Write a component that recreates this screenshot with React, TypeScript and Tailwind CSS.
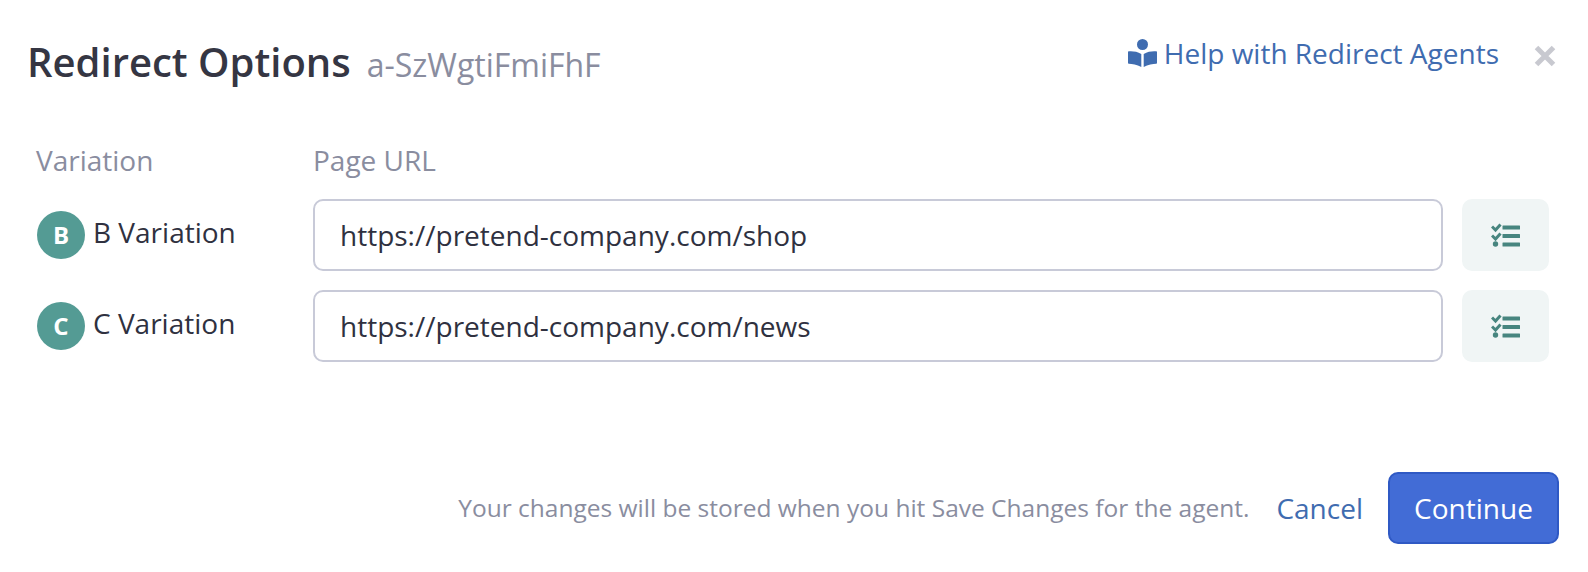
const font = { fontFamily: '"Open Sans", sans-serif' };

const ChecklistIcon = () => (
  <svg width="29" height="24" viewBox="0 0 29 24" fill="none">
    <path d="M1 3.5 L4.5 7 L9.5 1.5" stroke="#47857f" strokeWidth="3" />
    <path d="M1 12.5 L4.5 16 L9.5 10.5" stroke="#47857f" strokeWidth="3" />
    <circle cx="4.5" cy="21" r="2.7" fill="#47857f" />
    <rect x="11.5" y="2.5" width="17.5" height="4" rx="0.5" fill="#47857f" />
    <rect x="11.5" y="11" width="17.5" height="4" rx="0.5" fill="#47857f" />
    <rect x="11.5" y="19.5" width="17.5" height="4" rx="0.5" fill="#47857f" />
  </svg>
);

const BookReaderIcon = () => (
  <svg width="29" height="28" viewBox="0 0 29 28" fill="#3f6cb0">
    <circle cx="14.5" cy="5.5" r="5.5" />
    <path d="M0 12.5 C4 12 9 12.5 13.3 15 V28 C9 25.8 4 25 0.8 24.8 C0.3 24.8 0 24.4 0 24 Z" />
    <path d="M29 12.5 C25 12 20 12.5 15.7 15 V28 C20 25.8 25 25 28.2 24.8 C28.7 24.8 29 24.4 29 24 Z" />
  </svg>
);

const CloseIcon = () => (
  <svg width="22" height="22" viewBox="0 0 22 22" fill="none" className="ml-[35px] mt-[6px]">
    <path d="M2.5 2.5 L19.5 19.5 M19.5 2.5 L2.5 19.5" stroke="#c8c9d0" strokeWidth="5" />
  </svg>
);

const rows = [
  { letter: "B", url: "https://pretend-company.com/shop" },
  { letter: "C", url: "https://pretend-company.com/news" },
];

export default function App() {
  return (
    <div
      className="w-[1588px] h-[572px] bg-white flex flex-col overflow-hidden text-[#2f3140]"
      style={font}
    >
      <div className="flex items-start justify-between pl-[27px] pr-[32px] pt-[36px]">
        <div className="flex items-baseline gap-[16px]">
          <h1 className="text-[40px] leading-[52px] font-semibold text-[#353643]">Redirect Options</h1>
          <span className="text-[32px] leading-[40px] text-[#8a8d9f]">a-SzWgtiFmiFhF</span>
        </div>
        <div className="flex items-center mt-[-1px]">
          <a className="flex items-center gap-[7px] text-[28px] leading-[36px] text-[#3f6cb0]">
            <BookReaderIcon />
            Help with Redirect Agents
          </a>
          <CloseIcon />
        </div>
      </div>

      <div className="flex pl-[36px] mt-[54px] text-[28px] leading-[36px] text-[#8a8d9f]">
        <div className="w-[277px]">Variation</div>
        <div>Page URL</div>
      </div>

      <div className="flex flex-col gap-[19px] pl-[37px] pr-[39px] mt-[21px]">
        {rows.map((row) => (
          <div key={row.letter} className="flex items-center">
            <div className="w-[276px] flex items-center gap-[8px]">
              <div className="w-[48px] h-[48px] rounded-full bg-[#549b94] text-white text-[24px] font-bold flex items-center justify-center">
                {row.letter}
              </div>
              <span className="text-[28px] leading-[36px] text-[#2f3140] mt-[-6px]">{row.letter} Variation</span>
            </div>
            <input
              readOnly
              value={row.url}
              className="w-[1130px] h-[72px] rounded-[10px] border-2 border-[#c8cad8] px-[25px] text-[28px] text-[#2f3140] outline-none"
            />
            <button className="ml-[19px] w-[87px] h-[72px] rounded-[10px] bg-[#f0f5f5] flex items-center justify-center">
              <ChecklistIcon />
            </button>
          </div>
        ))}
      </div>

      <div className="flex items-center justify-end pr-[29px] mt-[110px]">
        <span className="text-[24.5px] text-[#8a8d9f]">Your changes will be stored when you hit Save Changes for the agent.</span>
        <a className="ml-[27px] text-[28px] text-[#3f6cb0]">Cancel</a>
        <button className="ml-[25px] w-[171px] h-[72px] rounded-[10px] bg-[#426cd6] border-2 border-[#2f59c4] text-white text-[28px]">
          Continue
        </button>
      </div>
    </div>
  );
}
